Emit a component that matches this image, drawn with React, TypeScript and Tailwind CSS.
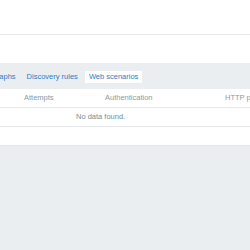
import React from "react";

const tabs = ["Graphs", "Discovery rules", "Web scenarios"];
const columns = [
  { name: "Attempts", w: "w-[81px]" },
  { name: "Authentication", w: "w-[120px]" },
  { name: "HTTP proxy", w: "w-[100px]" },
];

const App = () => {
  return (
    <div className="w-[250px] h-[250px] overflow-hidden bg-[#ebeef0] font-['Liberation_Sans',Arial,sans-serif] text-[7.5px]">
      {/* header */}
      <div className="h-[35px] bg-white border-b border-[#e6e9eb]" />

      {/* main box */}
      <div className="bg-white">
        <div className="h-[28px]" />

        {/* tabs */}
        <div className="h-[26px] bg-[#ebeef0] flex items-center pt-[2px] overflow-hidden">
          <div className="flex items-center ml-[-13px] gap-[3px]">
            {tabs.map((t) => (
              <div
                key={t}
                className={
                  t === "Web scenarios"
                    ? "h-[12px] px-[4px] flex items-center bg-white text-[#2a7ec4]"
                    : "h-[12px] px-[4px] flex items-center text-[#2a7ec4]"
                }
              >
                {t}
              </div>
            ))}
          </div>
        </div>

        {/* table */}
        <div className="flex h-[19px] items-center border-b border-[#e6e9eb] text-[#8a9ba5] whitespace-nowrap pl-[24px] overflow-hidden">
          {columns.map((c) => (
            <div key={c.name} className={`${c.w} shrink-0`}>
              {c.name}
            </div>
          ))}
        </div>
        <div className="h-[19px] flex items-center border-b border-[#e6e9eb] pl-[76px] text-[#768d99]">
          No data found.
        </div>
        <div className="h-[19px] border-b border-[#e3e6e8]" />
      </div>
    </div>
  );
};

export default App;
